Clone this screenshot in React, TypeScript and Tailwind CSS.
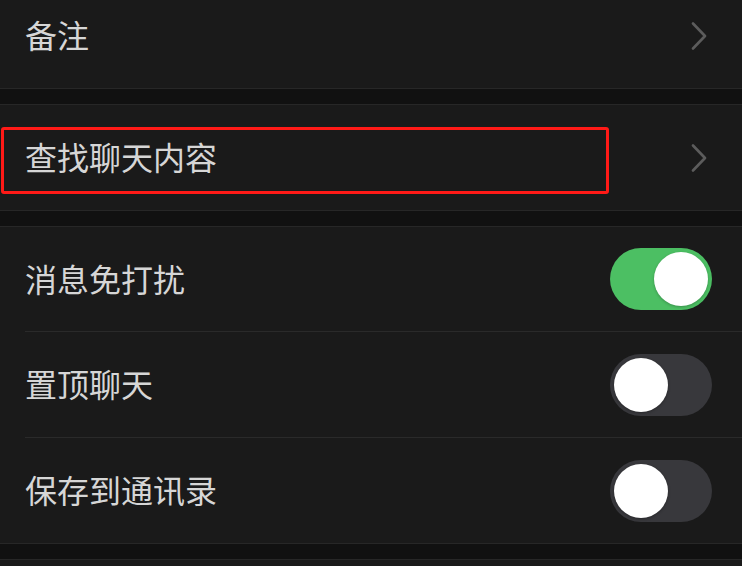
import React from "react";

const font = { fontFamily: '"Noto Sans CJK SC", "Noto Sans", sans-serif' };

function Chevron() {
  return (
    <svg width="16" height="28" viewBox="0 0 16 28" className="shrink-0">
      <path d="M2 1.5 L14 14 L2 26.5" fill="none" stroke="#5c5c5c" strokeWidth="2.6" strokeLinecap="round" strokeLinejoin="round" />
    </svg>
  );
}

function Toggle({ on }: { on: boolean }) {
  return on ? (
    <div className="w-[102px] h-[62px] rounded-full bg-[#4cbf63] flex items-center justify-end pr-[4px] shrink-0">
      <div className="w-[54px] h-[54px] rounded-full bg-white shadow-[0_1px_3px_rgba(0,0,0,0.25)]" />
    </div>
  ) : (
    <div className="w-[102px] h-[62px] rounded-full bg-[#38383c] flex items-center justify-start pl-[4px] shrink-0">
      <div className="w-[54px] h-[54px] rounded-full bg-white shadow-[0_1px_3px_rgba(0,0,0,0.3)]" />
    </div>
  );
}

function Gap() {
  return <div className="h-[17px] bg-[#111111] border-t border-b border-[#272727]" />;
}

export default function App() {
  return (
    <div className="w-[742px] h-[566px] overflow-hidden bg-[#111111] text-[#d6d6d6]" style={font}>
      <div className="h-[88px] bg-[#1a1a1a] flex items-center justify-between pl-[25px] pr-[35px] pb-[16px]">
        <span className="text-[32px] leading-none pb-[4px]">备注</span>
        <Chevron />
      </div>
      <Gap />
      <div className="relative h-[105px] bg-[#1a1a1a] flex items-center justify-between pl-[25px] pr-[35px]">
        <span className="text-[32px] leading-none pb-[3px]">查找聊天内容</span>
        <Chevron />
        <div className="absolute left-[1px] top-[22px] w-[608px] h-[67px] border-[3px] border-[#ff1a17] rounded-[3px]" />
      </div>
      <Gap />
      <div className="bg-[#1a1a1a] pl-[25px]">
        <div className="h-[105px] flex items-center justify-between pr-[30px] border-b border-[#2a2a2a]">
          <span className="text-[32px] leading-none pb-[3px]">消息免打扰</span>
          <Toggle on />
        </div>
        <div className="h-[106px] flex items-center justify-between pr-[30px] border-b border-[#2a2a2a]">
          <span className="text-[32px] leading-none pb-[3px]">置顶聊天</span>
          <Toggle on={false} />
        </div>
        <div className="h-[105px] flex items-center justify-between pr-[30px]">
          <span className="text-[32px] leading-none pb-[3px]">保存到通讯录</span>
          <Toggle on={false} />
        </div>
      </div>
      <Gap />
      <div className="h-[20px] bg-[#1a1a1a]" />
    </div>
  );
}
